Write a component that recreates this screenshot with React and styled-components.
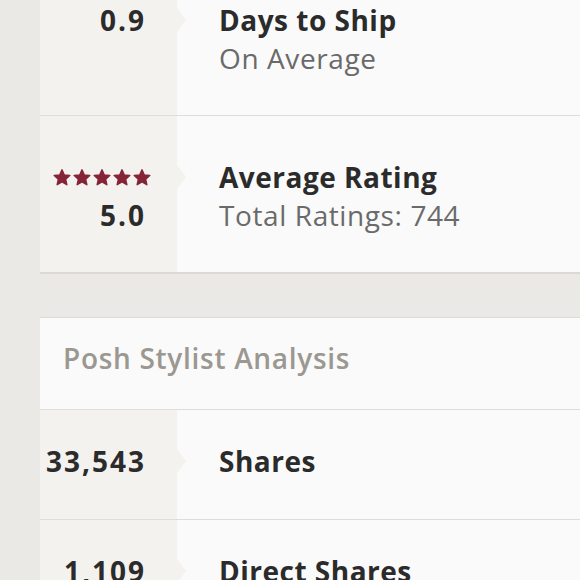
import styled, { createGlobalStyle } from "styled-components";

const GlobalStyle = createGlobalStyle`
  html, body {
    margin: 0;
    padding: 0;
    background: #ebe9e6;
    overflow: hidden;
  }
  body {
    font-family: "Open Sans", "Liberation Sans", sans-serif;
    -webkit-font-smoothing: antialiased;
  }
`;

const Page = styled.div`
  width: 580px;
  height: 580px;
  overflow: hidden;
  padding-left: 40px;
  box-sizing: border-box;
`;

const Card = styled.section`
  width: 600px;
  background: #fafafa;
  border-top: ${(props) => (props.cut ? "none" : "1px solid #dedad5")};
  border-bottom: 2px solid #dcd8d3;
  margin-top: ${(props) => (props.cut ? "-41px" : "0")};
  margin-bottom: 43px;
`;

const SectionHeader = styled.h2`
  margin: 0;
  padding: 21px 23px 32px;
  font-size: 28px;
  line-height: 38px;
  font-weight: 600;
  letter-spacing: 0.7px;
  color: #9b9791;
  border-bottom: 1px solid #e0ddd8;
`;

const Row = styled.div`
  display: grid;
  grid-template-columns: 137px 1fr;
  border-bottom: ${(props) => (props.last ? "none" : "1px solid #e0ddd8")};
`;

const ValueCell = styled.div`
  position: relative;
  background: #f4f2ee;
  padding: ${(props) => (props.compact ? "32px 31px 39px 0" : "42px 31px 38px 0")};
  text-align: right;
  font-size: 28px;
  line-height: 38px;
  font-weight: 700;
  letter-spacing: 2px;
  color: #2b2b2b;
  white-space: nowrap;

  &::after {
    content: "";
    position: absolute;
    right: -9px;
    top: ${(props) => (props.compact ? "39px" : "49px")};
    border-top: 12px solid transparent;
    border-bottom: 12px solid transparent;
    border-left: 9px solid #f4f2ee;
  }
`;

const InfoCell = styled.div`
  padding: ${(props) => (props.compact ? "32px 42px 39px" : "42px 42px 38px")};
`;

const Title = styled.div`
  font-size: 28px;
  line-height: 38px;
  font-weight: 700;
  letter-spacing: 0.5px;
  color: #2b2b2b;
`;

const Subtitle = styled.div`
  font-size: 28px;
  line-height: 38px;
  font-weight: 400;
  letter-spacing: 0.6px;
  color: #6a6a6a;
`;

const Stars = styled.div`
  display: flex;
  justify-content: flex-end;
  align-items: center;
  gap: 2px;
  height: 38px;
  margin-right: -5px;

  svg {
    flex-shrink: 0;
  }
`;

const Star = () => (
  <svg width="18" height="17" viewBox="0 0 24 23">
    <path
      d="M12 1.2l3.1 6.9 7.4.7-5.6 5 1.6 7.4L12 17.4l-6.5 3.8 1.6-7.4-5.6-5 7.4-.7z"
      fill="#862437"
      stroke="#862437"
      strokeWidth="2"
      strokeLinejoin="round"
    />
  </svg>
);

const StatRow = ({ value, stars, title, subtitle, last, compact }) => (
  <Row last={last}>
    <ValueCell compact={compact}>
      {stars && (
        <Stars>
          {[0, 1, 2, 3, 4].map((i) => (
            <Star key={i} />
          ))}
        </Stars>
      )}
      {value}
    </ValueCell>
    <InfoCell compact={compact}>
      <Title>{title}</Title>
      {subtitle && <Subtitle>{subtitle}</Subtitle>}
    </InfoCell>
  </Row>
);

export default function App() {
  return (
    <Page>
      <GlobalStyle />
      <Card cut>
        <StatRow value="0.9" title="Days to Ship" subtitle="On Average" />
        <StatRow
          value="5.0"
          stars
          title="Average Rating"
          subtitle="Total Ratings: 744"
          last
        />
      </Card>
      <Card>
        <SectionHeader>Posh Stylist Analysis</SectionHeader>
        <StatRow value="33,543" title="Shares" compact />
        <StatRow value="1,109" title="Direct Shares" compact last />
      </Card>
    </Page>
  );
}
